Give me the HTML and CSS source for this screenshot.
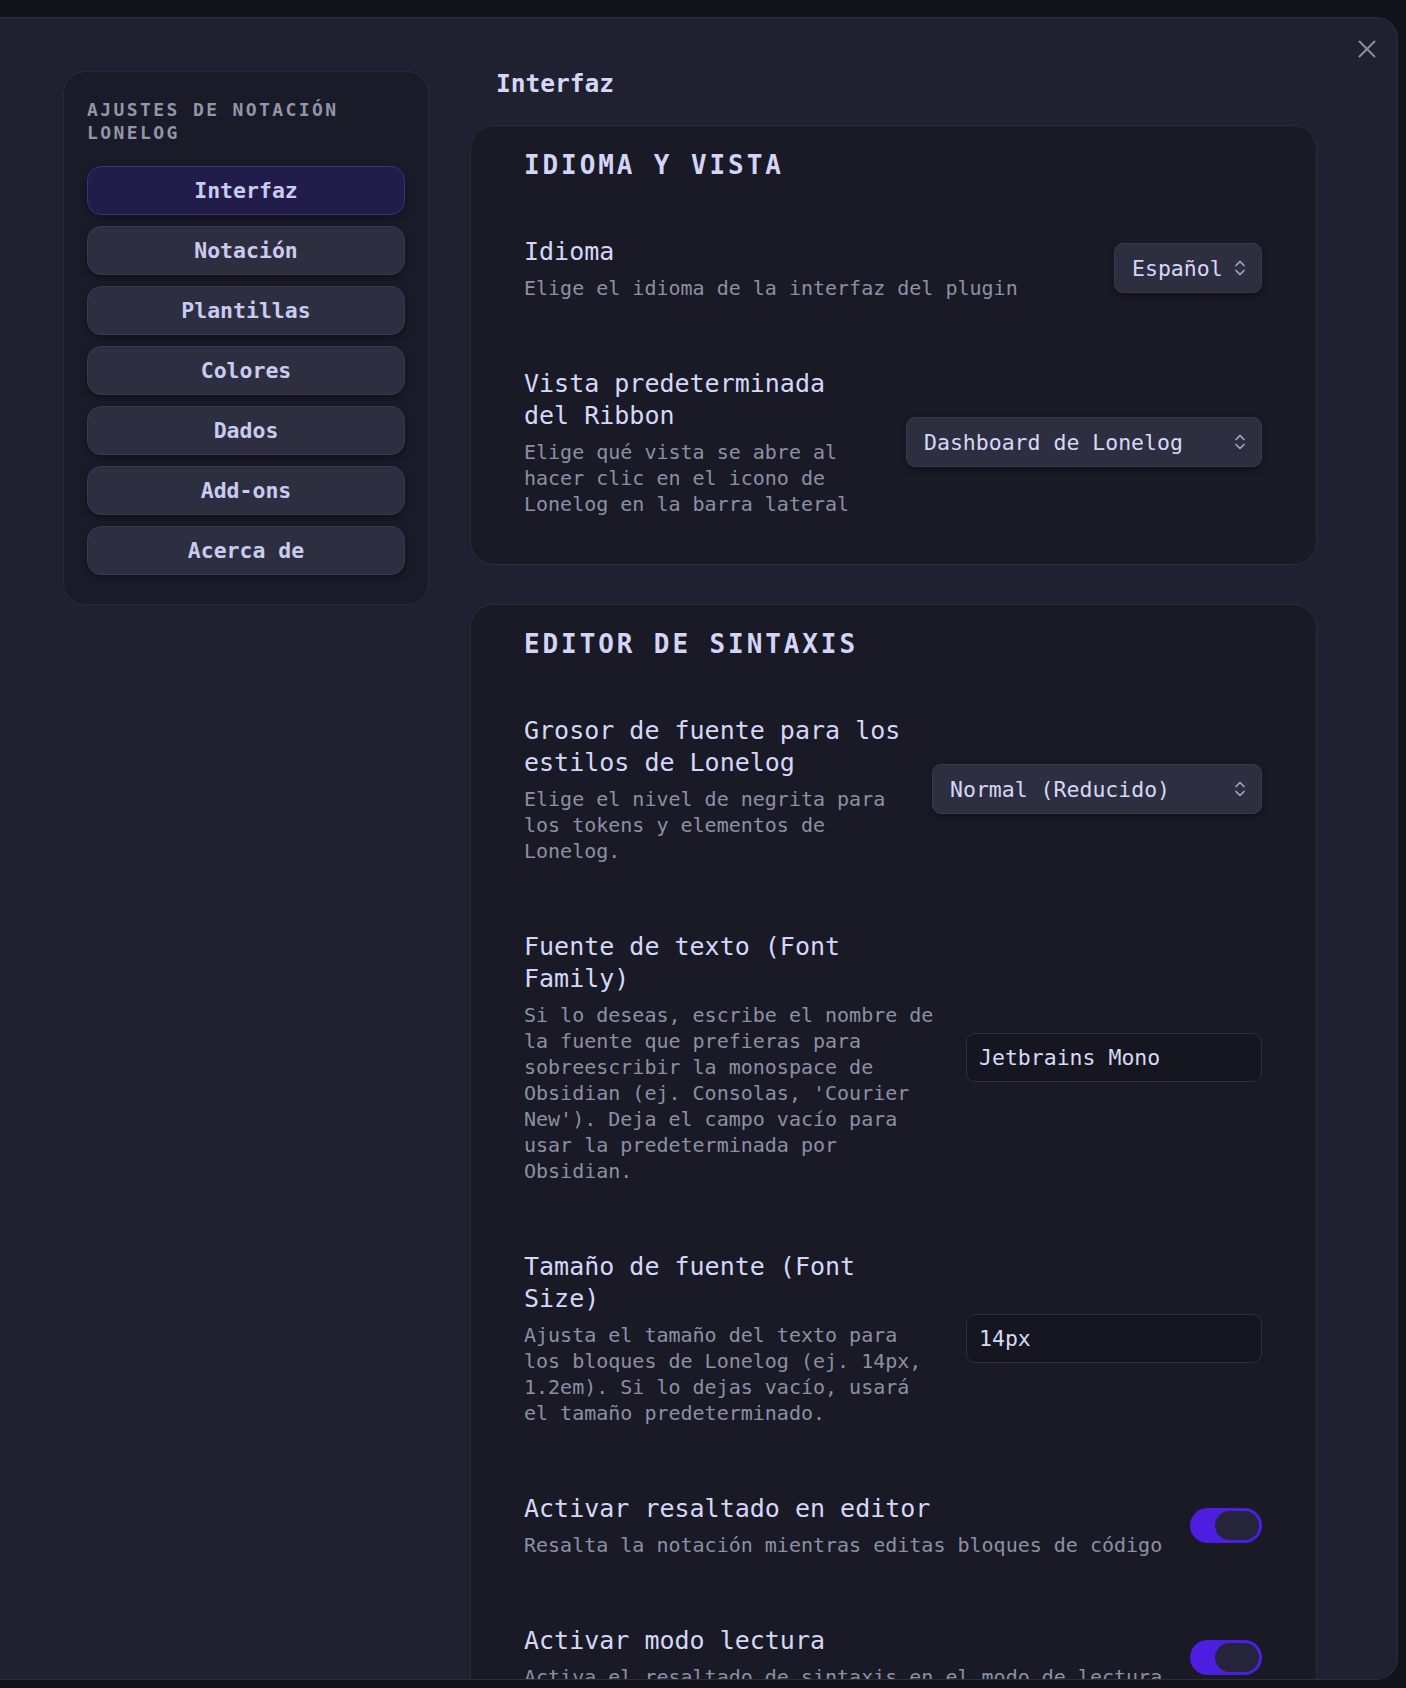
FILE: index.html
```html
<!DOCTYPE html>
<html lang="es">
<head>
    <meta charset="UTF-8">
    <meta name="viewport" content="width=device-width, initial-scale=1.0">
    <title>Ajustes de notación Lonelog</title>
    <link rel="stylesheet" href="styles.css">
</head>
<body>
    <div class="modal">
        <button class="modal-close" aria-label="Cerrar">
            <svg width="18" height="18" viewBox="0 0 18 18" fill="none" stroke="currentColor" stroke-width="2" stroke-linecap="round">
                <path d="M1.5 1.5 L16.5 16.5 M16.5 1.5 L1.5 16.5"/>
            </svg>
        </button>

        <div class="modal-content">
            <nav class="sidebar">
                <div class="sidebar-title">Ajustes de notación Lonelog</div>
                <button class="nav-btn active">Interfaz</button>
                <button class="nav-btn">Notación</button>
                <button class="nav-btn">Plantillas</button>
                <button class="nav-btn">Colores</button>
                <button class="nav-btn">Dados</button>
                <button class="nav-btn">Add-ons</button>
                <button class="nav-btn">Acerca de</button>
            </nav>

            <main class="main">
                <h2 class="page-title">Interfaz</h2>

                <section class="card">
                    <h3 class="card-heading">Idioma y vista</h3>

                    <div class="setting">
                        <div class="setting-info">
                            <div class="setting-name">Idioma</div>
                            <div class="setting-desc">Elige el idioma de la interfaz del plugin</div>
                        </div>
                        <div class="dropdown dropdown-lang">
                            <span>Español</span>
                            <svg class="dropdown-arrow" width="12" height="20" viewBox="0 0 12 20" fill="none" stroke="currentColor" stroke-width="1.7" stroke-linecap="round" stroke-linejoin="round">
                                <path d="M2 7.5 L6 3.5 L10 7.5 M2 12.5 L6 16.5 L10 12.5"/>
                            </svg>
                        </div>
                    </div>

                    <div class="setting">
                        <div class="setting-info">
                            <div class="setting-name">Vista predeterminada del Ribbon</div>
                            <div class="setting-desc">Elige qué vista se abre al hacer clic en el icono de Lonelog en la barra lateral</div>
                        </div>
                        <div class="dropdown dropdown-view">
                            <span>Dashboard de Lonelog</span>
                            <svg class="dropdown-arrow" width="12" height="20" viewBox="0 0 12 20" fill="none" stroke="currentColor" stroke-width="1.7" stroke-linecap="round" stroke-linejoin="round">
                                <path d="M2 7.5 L6 3.5 L10 7.5 M2 12.5 L6 16.5 L10 12.5"/>
                            </svg>
                        </div>
                    </div>
                </section>

                <section class="card">
                    <h3 class="card-heading">Editor de sintaxis</h3>

                    <div class="setting">
                        <div class="setting-info">
                            <div class="setting-name">Grosor de fuente para los estilos de Lonelog</div>
                            <div class="setting-desc">Elige el nivel de negrita para los tokens y elementos de Lonelog.</div>
                        </div>
                        <div class="dropdown dropdown-weight">
                            <span>Normal (Reducido)</span>
                            <svg class="dropdown-arrow" width="12" height="20" viewBox="0 0 12 20" fill="none" stroke="currentColor" stroke-width="1.7" stroke-linecap="round" stroke-linejoin="round">
                                <path d="M2 7.5 L6 3.5 L10 7.5 M2 12.5 L6 16.5 L10 12.5"/>
                            </svg>
                        </div>
                    </div>

                    <div class="setting">
                        <div class="setting-info">
                            <div class="setting-name">Fuente de texto (Font Family)</div>
                            <div class="setting-desc">Si lo deseas, escribe el nombre de la fuente que prefieras para sobreescribir la monospace de Obsidian (ej. Consolas, 'Courier New'). Deja el campo vacío para usar la predeterminada por Obsidian.</div>
                        </div>
                        <input class="text-input" type="text" value="Jetbrains Mono">
                    </div>

                    <div class="setting">
                        <div class="setting-info">
                            <div class="setting-name">Tamaño de fuente (Font Size)</div>
                            <div class="setting-desc">Ajusta el tamaño del texto para los bloques de Lonelog (ej. 14px, 1.2em). Si lo dejas vacío, usará el tamaño predeterminado.</div>
                        </div>
                        <input class="text-input" type="text" value="14px">
                    </div>

                    <div class="setting">
                        <div class="setting-info">
                            <div class="setting-name">Activar resaltado en editor</div>
                            <div class="setting-desc">Resalta la notación mientras editas bloques de código</div>
                        </div>
                        <div class="toggle is-on"></div>
                    </div>

                    <div class="setting">
                        <div class="setting-info">
                            <div class="setting-name">Activar modo lectura</div>
                            <div class="setting-desc">Activa el resaltado de sintaxis en el modo de lectura</div>
                        </div>
                        <div class="toggle is-on"></div>
                    </div>
                </section>
            </main>
        </div>
    </div>
</body>
</html>
```

FILE: styles.css
```css
* {
    box-sizing: border-box;
}
html, body {
    margin: 0;
    height: 100%;
    overflow: hidden;
}
body {
    background-color: #12131b;
    font-family: "DejaVu Sans Mono", "Liberation Mono", monospace;
}

/* settings modal */
.modal {
    position: relative;
    margin-top: 17px;
    width: 1398px;
    height: 1663px;
    background-color: #1f2030;
    border: 1px solid #2b2c3c;
    border-left: none;
    border-radius: 0 22px 22px 0;
    overflow: hidden;
}
.modal-close {
    position: absolute;
    top: 22px;
    right: 21px;
    padding: 0;
    width: 18px;
    height: 18px;
    border: none;
    background: none;
    color: #8c8e9f;
    cursor: pointer;
}
.modal-content {
    display: flex;
    gap: 41px;
    padding: 50px 0 0 63px;
}

/* left navigation */
.sidebar {
    flex: none;
    align-self: flex-start;
    width: 366px;
    margin-top: 3px;
    padding: 26px 23px 29px;
    background-color: #1a1b28;
    border: 1px solid #2a2b3a;
    border-radius: 22px;
}
.sidebar-title {
    margin-bottom: 21px;
    font-size: 18px;
    line-height: 23.4px;
    font-weight: 700;
    letter-spacing: 2.4px;
    text-transform: uppercase;
    color: #9395aa;
}
.nav-btn {
    display: block;
    width: 100%;
    height: 49px;
    margin-bottom: 11px;
    padding: 0;
    background-color: #2d2f41;
    border: 1px solid #37394c;
    border-radius: 14px;
    box-shadow: 0 3px 6px rgba(0, 0, 0, 0.35);
    font-family: inherit;
    font-size: 21.5px;
    font-weight: 700;
    color: #c9cbf1;
    cursor: pointer;
}
.nav-btn:last-child {
    margin-bottom: 0;
}
.nav-btn.active {
    background-color: #221c4b;
    border-color: #3a3184;
}

/* right column */
.main {
    flex: none;
    width: 847px;
}
.page-title {
    margin: 0 0 25px;
    padding-left: 26px;
    font-size: 24.5px;
    line-height: 32px;
    font-weight: 700;
    color: #d6d7f8;
}
.card {
    margin-bottom: 39px;
    padding: 22px 54px 14px 53px;
    background-color: #191a26;
    border: 1px solid #2a2b3b;
    border-radius: 24px;
}
.card-heading {
    margin: 0 0 20px;
    font-size: 26px;
    line-height: 34px;
    font-weight: 700;
    letter-spacing: 2.9px;
    text-transform: uppercase;
    color: #d3d4f6;
}

/* one setting row */
.setting {
    display: flex;
    align-items: center;
    padding: 33.5px 0;
}
.setting-info {
    flex: 1 1 0;
    min-width: 0;
    margin-right: 25px;
}
.setting-name {
    font-size: 25px;
    line-height: 32px;
    color: #d6d7f8;
}
.setting-desc {
    margin-top: 7px;
    font-size: 20px;
    line-height: 26px;
    color: #8d8fa4;
}

.dropdown {
    flex: none;
    display: flex;
    align-items: center;
    justify-content: space-between;
    height: 50px;
    padding: 0 15px 0 17px;
    background-color: #2d2f41;
    border: 1px solid #383a4e;
    border-radius: 9px;
    box-shadow: 0 3px 6px rgba(0, 0, 0, 0.35);
    font-size: 21.5px;
    color: #d6d7f8;
}
.dropdown-arrow {
    color: #a2a4ba;
}
.dropdown-lang {
    width: 148px;
}
.dropdown-view {
    width: 356px;
}
.dropdown-weight {
    width: 330px;
}

.text-input {
    flex: none;
    width: 296px;
    height: 49px;
    padding: 0 12px;
    background-color: #15161f;
    border: 1px solid #2e2f3e;
    border-radius: 9px;
    outline: none;
    font-family: inherit;
    font-size: 21.5px;
    color: #d8d9f8;
}

.toggle {
    flex: none;
    position: relative;
    width: 72px;
    height: 35px;
    border-radius: 18px;
    background-color: #3a3b4f;
}
.toggle.is-on {
    background-color: #4b1ee0;
}
.toggle::after {
    content: "";
    position: absolute;
    top: 3px;
    right: 3px;
    width: 44px;
    height: 29px;
    border-radius: 15px;
    background-color: #24253a;
}
```
